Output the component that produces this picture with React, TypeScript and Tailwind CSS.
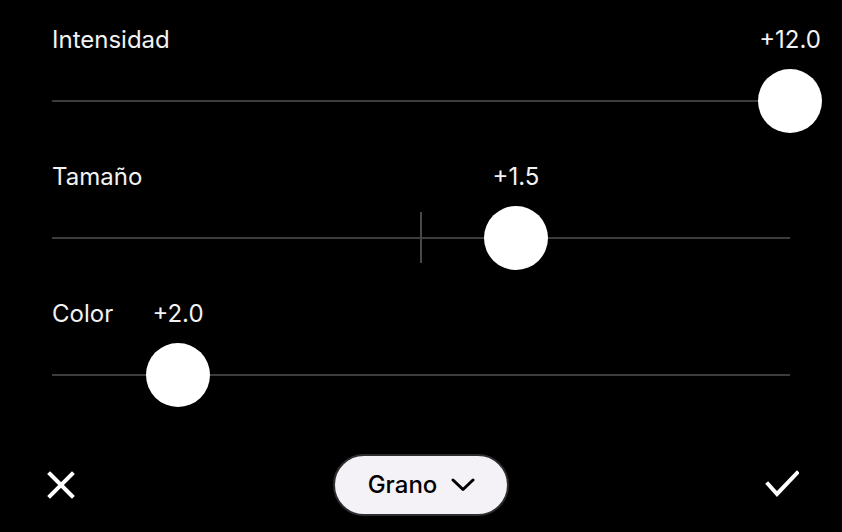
import React from 'react';

type Row = { label: string; value: string; pos: number; centerTick?: boolean };

const rows: Row[] = [
  { label: 'Intensidad', value: '+12.0', pos: 1 },
  { label: 'Tamaño', value: '+1.5', pos: 0.6287, centerTick: true },
  { label: 'Color', value: '+2.0', pos: 0.1707 },
];

const TRACK_W = 738;

const SliderRow: React.FC<{ row: Row }> = ({ row }) => {
  const x = row.pos * TRACK_W;
  return (
    <div className="flex flex-col h-[137px]">
      <div className="relative h-[28px] leading-[28px] text-[24px] text-[#f2f2f2]">
        <span>{row.label}</span>
        <span className="absolute top-0 -translate-x-1/2 whitespace-nowrap" style={{ left: x }}>
          {row.value}
        </span>
      </div>
      <div className="relative mt-[15px] h-[64px]">
        <div className="absolute left-0 right-0 top-[31px] h-[2px] bg-[#3c3c3e]" />
        {row.centerTick && (
          <div className="absolute left-[368px] top-[6px] h-[51px] w-[2px] bg-[#48484a]" />
        )}
        <div
          className="absolute top-0 h-[64px] w-[64px] -translate-x-1/2 rounded-full bg-white"
          style={{ left: x }}
        />
      </div>
    </div>
  );
};

export default function App() {
  return (
    <div
      className="w-[842px] h-[532px] bg-black overflow-hidden flex flex-col"
      style={{ fontFamily: 'Inter, "Noto Sans", sans-serif' }}
    >
      <div className="px-[52px] pt-[26px]">
        {rows.map((r) => (
          <SliderRow key={r.label} row={r} />
        ))}
      </div>
      <div className="flex items-center justify-between mt-[17px] pl-[46px] pr-[43px]">
        <button className="w-[30px] h-[30px] flex items-center justify-center">
          <svg width="30" height="30" viewBox="0 0 30 30">
            <path d="M4 4 L26 26 M26 4 L4 26" stroke="white" strokeWidth="4" strokeLinecap="square" fill="none" />
          </svg>
        </button>
        <button className="flex items-center gap-[14px] h-[62px] w-[176px] justify-center rounded-full bg-[#f4f2f6] border-2 border-[#2e2e30] text-[24px] font-medium text-black pl-[2px]">
          <span>Grano</span>
          <svg width="24" height="14" viewBox="0 0 24 14">
            <path d="M2 2 L12 11.5 L22 2" stroke="black" strokeWidth="3" strokeLinecap="round" strokeLinejoin="round" fill="none" />
          </svg>
        </button>
        <button className="w-[34px] h-[30px] flex items-center justify-center">
          <svg width="34" height="30" viewBox="0 0 34 30">
            <path d="M3 14 L12 24 L32 3" stroke="white" strokeWidth="4" strokeLinecap="square" strokeLinejoin="miter" fill="none" />
          </svg>
        </button>
      </div>
    </div>
  );
}
